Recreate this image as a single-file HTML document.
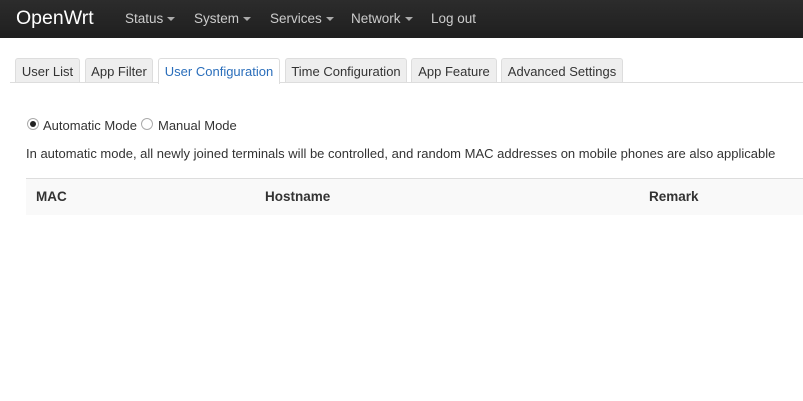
<!DOCTYPE html>
<html><head><style>
body{margin:0;width:803px;height:401px;background:#fff;font-family:"Liberation Sans",Arial,sans-serif;font-size:13px;color:#333;position:relative;overflow:hidden}
.nav{position:absolute;left:0;top:0;width:803px;height:38px;background:linear-gradient(#2c2c2c,#1f1f1f)}
.nav span{position:absolute;top:11px;color:#ccc;font-size:13.5px}
.brand{position:absolute;left:16px;top:7px;color:#fff;font-size:19.5px}
.car{display:inline-block;width:0;height:0;border-left:4px solid transparent;border-right:4px solid transparent;border-top:4px solid #aaa;vertical-align:middle;margin-left:4px}
.line{position:absolute;left:10px;right:0;top:82px;border-top:1px solid #ddd}
.tab{position:absolute;top:58px;height:24px;box-sizing:border-box;border:1px solid #ddd;border-bottom:none;border-radius:3px 3px 0 0;background:#eee;line-height:26px;text-align:center;color:#333;font-size:13px}
.tab.a{background:#fff;color:#2a6ebb;height:26px}
.rad{position:absolute;top:118px;width:12px;height:12px;border:1px solid #aaa;border-radius:50%;background:#fff;box-sizing:border-box}
.t{position:absolute;white-space:nowrap}
.th{position:absolute;left:26px;right:0;top:178px;height:36px;background:#f9f9f9;border-top:1px solid #ddd}
.th b{position:absolute;top:10px;font-size:13.5px}
</style></head><body>
<div class="nav">
<div class="brand">OpenWrt</div>
<span style="left:125px">Status<i class="car"></i></span>
<span style="left:194px">System<i class="car"></i></span>
<span style="left:270px">Services<i class="car"></i></span>
<span style="left:351px">Network<i class="car"></i></span>
<span style="left:431px">Log out</span>
</div>
<div class="line"></div>
<div class="tab" style="left:15px;width:65px">User List</div>
<div class="tab" style="left:85px;width:68px">App Filter</div>
<div class="tab a" style="left:158px;width:122px">User Configuration</div>
<div class="tab" style="left:285px;width:122px">Time Configuration</div>
<div class="tab" style="left:411px;width:86px">App Feature</div>
<div class="tab" style="left:501px;width:122px">Advanced Settings</div>
<div class="rad" style="left:27px"><div style="width:6px;height:6px;background:#222;border-radius:50%;margin:2px"></div></div>
<div class="t" style="left:43px;top:118px">Automatic Mode</div>
<div class="rad" style="left:141px"></div>
<div class="t" style="left:158px;top:118px">Manual Mode</div>
<div class="t" style="left:26px;top:146px;font-size:13px">In automatic mode, all newly joined terminals will be controlled, and random MAC addresses on mobile phones are also applicable</div>
<div class="th"><b style="left:10px">MAC</b><b style="left:239px">Hostname</b><b style="left:623px">Remark</b></div>
</body></html>
